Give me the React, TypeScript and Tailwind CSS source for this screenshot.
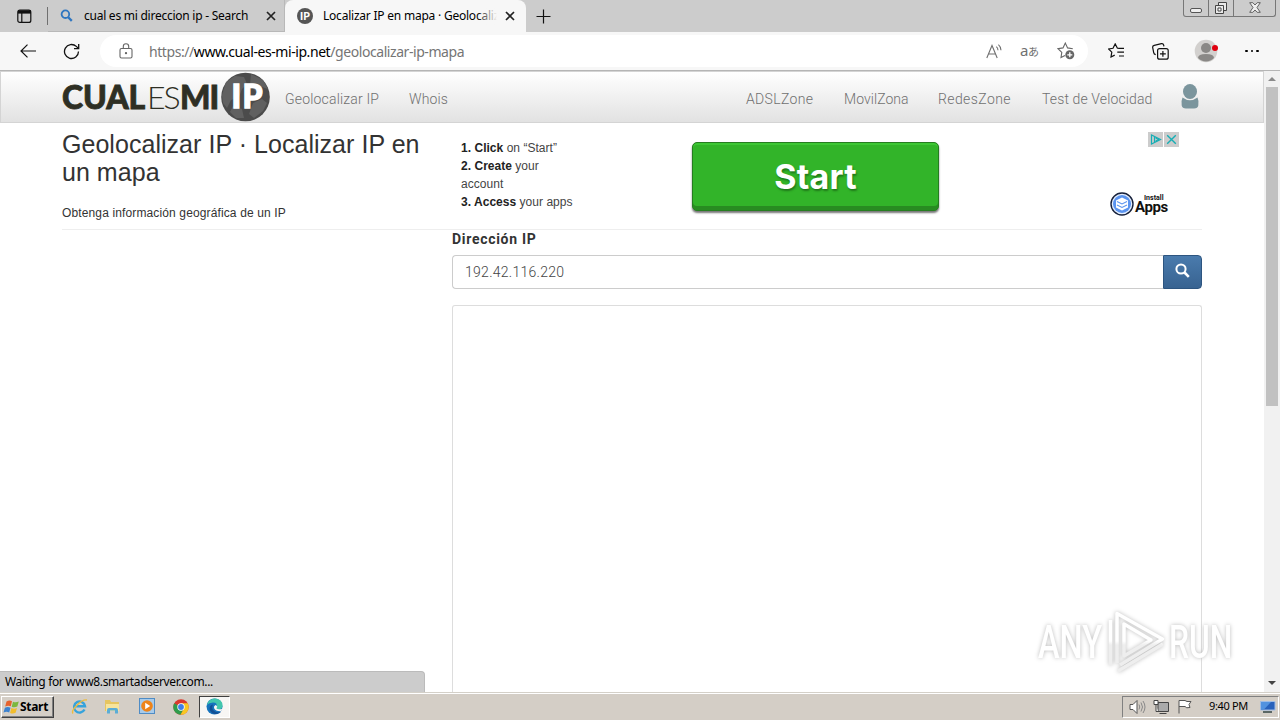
import type { ReactNode } from "react";
import clsx from "clsx";

const UI = "font-['Noto_Sans',sans-serif]";
const ARIAL = "font-['Liberation_Sans',sans-serif]";
const ROBOTO = "font-['Roboto',sans-serif]";

const CloseIcon = () => (
  <svg width="10" height="10" viewBox="0 0 10 10" className="shrink-0" stroke="#222" strokeWidth="1.7">
    <path d="M1 1l8 8M9 1l-8 8" />
  </svg>
);

const IpBadge = () => (
  <svg width="16" height="16" viewBox="0 0 16 16" className="shrink-0">
    <circle cx="8" cy="8" r="8" fill="#555" />
    <text x="8" y="11.7" textAnchor="middle" fontFamily="Lato" fontWeight="900" fontSize="10.5" fill="#fff">IP</text>
  </svg>
);

const TabBar = () => (
  <div className="flex h-8 bg-[#cccccc]">
    <div className="flex w-[47px] items-center pl-[17px]">
      <svg width="15" height="15" viewBox="0 0 15 15" fill="none" stroke="#111" strokeWidth="1.2">
        <rect x=".8" y="1.2" width="13" height="12.2" rx="2" />
        <path d="M1 3h13" strokeWidth="3.2" />
        <path d="M4.8 4v9" />
      </svg>
    </div>
    <div className="my-[7px] w-px bg-[#707070]" />
    <div className="flex w-[237px] items-center border-r border-b border-[#b8b8b8] pl-3">
      <svg width="13" height="13" viewBox="0 0 13 13" fill="none" stroke="#2f76c0" className="shrink-0">
        <circle cx="5.4" cy="5.2" r="3.8" strokeWidth="1.8" />
        <path d="M8.2 8.2l3.6 3.7" strokeWidth="2.3" />
      </svg>
      <span className={clsx(UI, "ml-[11px] w-[182px] whitespace-nowrap text-[12px] tracking-[-0.25px] text-black")}>
        cual es mi direccion ip - Search
      </span>
      <CloseIcon />
    </div>
    <div className="flex w-[241px] items-center rounded-t-lg bg-[#f7f7f7] pl-3">
      <IpBadge />
      <div className="relative ml-[10px] w-[174px] overflow-hidden">
        <span className={clsx(UI, "block whitespace-nowrap text-[12px] tracking-[-0.22px] text-black")}>
          Localizar IP en mapa · Geolocaliz
        </span>
        <div className="absolute inset-y-0 right-0 w-5 bg-linear-to-r from-transparent to-[#f7f7f7]" />
      </div>
      <div className="w-[8px]" />
      <CloseIcon />
    </div>
    <div className="flex flex-1 items-center pl-[10px]">
      <svg width="15" height="15" viewBox="0 0 15 15" stroke="#111" strokeWidth="1.2">
        <path d="M7.5 .5v14M.5 7.5h14" />
      </svg>
    </div>
    <div className="mr-1 flex h-[17px] w-[93px] rounded-b-[3px] border border-t-0 border-[#777]">
      <div className="flex w-[25px] items-end justify-center border-r border-[#777] pb-[3px]">
        <svg width="12" height="5" viewBox="0 0 12 5">
          <rect x=".5" y=".5" width="11" height="4" rx="1.5" fill="#eee" stroke="#555" />
        </svg>
      </div>
      <div className="flex w-[25px] items-end justify-center border-r border-[#777] pb-px">
        <svg width="14" height="14" viewBox="0 0 14 14" fill="#e8e8e8" stroke="#444">
          <path d="M4.500 1.500h8v8h-8z" />
          <path d="M1.500 4.500h8v8h-8z" />
          <path d="M4 7h3v3H4z" fill="#fff" />
        </svg>
      </div>
      <div className="flex flex-1 items-end justify-center pb-[3px]">
        <svg width="12" height="11" viewBox="0 0 12 11" fill="#eee" stroke="#555" strokeWidth=".9">
          <path d="M.7.7h3.1L6 3 8.200.7h3.1L8 5.5l3.300 4.800H8.200L6 8l-2.200 2.300H.7L4 5.500z" />
        </svg>
      </div>
    </div>
  </div>
);

const AddressBar = () => (
  <div className="flex h-[38px] items-center bg-[#f7f7f7]">
    <div className="flex w-[100px] items-center pl-5">
      <svg width="16" height="14" viewBox="0 0 16 14" fill="none" stroke="#111" strokeWidth="1.2">
        <path d="M7.500 .6L1 7l6.500 6.400M1 7h15" />
      </svg>
      <svg width="17" height="17" viewBox="0 0 17 17" fill="none" stroke="#111" strokeWidth="1.3" className="ml-[27px]">
        <path d="M15.500 8.500a7 7 0 1 1-2.200-5.100L15.500 5.500" />
        <path d="M15.700 1v4.700H11" />
      </svg>
    </div>
    <div className="flex h-8 w-[988px] items-center rounded-full bg-white pl-[19px]">
      <svg width="14" height="16" viewBox="0 0 14 16" fill="none" stroke="#666" strokeWidth="1.100">
        <rect x="1" y="5.500" width="12" height="9.500" rx="1.500" />
        <path d="M4.300 5.500V3.400a2.700 2.700 0 0 1 5.400 0v2.100" />
        <circle cx="7" cy="10.200" r=".6" fill="#666" />
      </svg>
      <span className={clsx(UI, "ml-4 w-[837px] whitespace-nowrap text-[14px] tracking-[-0.430px] text-[#757575]")}>
        https://<span className="text-black">www.cual-es-mi-ip.net</span>/geolocalizar-ip-mapa
      </span>
      <svg width="17" height="15" viewBox="0 0 17 15" fill="none" stroke="#707070" strokeWidth="1.100">
        <path d="M.8 14L6 1.500 11.200 14M2.600 10h6.900" />
        <path d="M10.300 2.600q1.600 1.300 1.700 3.600M12.400.7q2.400 2 2.600 5.600" />
      </svg>
      <span className="ml-[17px] w-[20px] whitespace-nowrap font-['Noto_Sans','Noto_Sans_CJK_JP',sans-serif] text-[15px] leading-4 tracking-[-0.500px] text-[#707070]">
        a<span className="text-[11px]">あ</span>
      </span>
      <svg width="18" height="18" viewBox="0 0 18 18" fill="none" stroke="#666" strokeWidth="1.100" className="ml-[17px]">
        <path d="M8 15l-4 2 .8-5.100L1 8.200l5-.8L8.300 2.600l2.300 4.800 5.200.8" transform="translate(0 -1.500)" />
        <circle cx="12.800" cy="12.800" r="4.500" fill="#666" stroke="none" />
        <path d="M12.800 10.300v5M10.300 12.800h5" stroke="#fff" strokeWidth="1.300" />
      </svg>
    </div>
    <div className="flex flex-1 items-center pl-5">
      <svg width="17" height="16" viewBox="0 0 17 16" fill="none" stroke="#111" strokeWidth="1.200">
        <path d="M10.500 5.400L9.300 5 7.200.9 5 5.300l-4.400.7 3.200 3.200-.8 4.800 3.700-1.900M10.500 5.400H16M9.300 9.200H16M11 13h5" />
      </svg>
      <svg width="17" height="17" viewBox="0 0 17 17" fill="none" stroke="#111" strokeWidth="1.200" className="ml-[27px]">
        <rect x="5.600" y="5.600" width="10.600" height="10.600" rx="2" />
        <path d="M10.900 8v5.800M8 10.900h5.800" />
        <path d="M3.700 11.700A2.600 2.600 0 0 1 1.700 9.600L.7 4.600a2 2 0 0 1 1.500-2.300L9.400.7a2 2 0 0 1 2.300 1.500l.2 1.200" />
      </svg>
      <svg width="24" height="24" viewBox="0 0 24 24" className="ml-[25px]">
        <circle cx="12" cy="12" r="11.300" fill="#d2d0ce" />
        <circle cx="12" cy="9" r="5" fill="#8a8886" />
        <path d="M4 19q0-4 8-4t8 4a11 11 0 0 1-16 0z" fill="#8a8886" />
        <circle cx="21" cy="9" r="3" fill="#e0000f" />
      </svg>
      <div className="ml-[27px] flex gap-[3px]">
        <i className="size-[2.500px] rounded-full bg-black" />
        <i className="size-[2.500px] rounded-full bg-black" />
        <i className="size-[2.500px] rounded-full bg-black" />
      </div>
    </div>
  </div>
);

const NavLink = ({ className, children }: { className: string; children: ReactNode }) => (
  <a className={clsx(ROBOTO, "pt-[5px] text-[14px] font-light whitespace-nowrap text-[#707070]", className)}>{children}</a>
);

const Navbar = () => (
  <nav className="flex h-[52px] items-center border border-[#d4d4d4] bg-linear-to-b from-white to-[#e2e2e2] pl-[61px]">
    <div className="flex h-[50px] w-[159px] items-center font-['Lato',sans-serif] text-[32px] whitespace-nowrap text-[#2e2f24]">
      <span className="w-[85px] font-black tracking-[-0.100px] [-webkit-text-stroke:0.800px_#2e2f24]">CUAL</span>
      <span className="w-[33px] font-light tracking-[-2px]">ES</span>
      <span className="font-black tracking-[-1px] [-webkit-text-stroke:0.800px_#2e2f24]">MI</span>
    </div>
    <svg width="49" height="50" viewBox="0 0 49 50">
      <circle cx="24.500" cy="25" r="24.300" fill="#4b4b4b" />
      <path d="M5 10L14 4l9 1 3 7-5 5-3 8-8 3-4 8-4-5-1-8zM30 2l12 6 5 9-6-2-6 5-6-7zM32 31l9-4 5 4-4 8-9 7-5-4zM12 34l9 3 2 9-8 0-6-6z" fill="#606060" />
      <text x="26" y="36" textAnchor="middle" textLength="31" fontFamily="Lato" fontWeight="900" fontSize="32" fill="#fff" stroke="#fff" strokeWidth="1.300">IP</text>
    </svg>
    <NavLink className="ml-[15px] w-[124px] tracking-[0.180px]">Geolocalizar IP</NavLink>
    <NavLink className="w-[337px] tracking-[0.100px]">Whois</NavLink>
    <NavLink className="w-[98px] tracking-[0.350px]">ADSLZone</NavLink>
    <NavLink className="w-[94px] tracking-[0.050px]">MovilZona</NavLink>
    <NavLink className="w-[104px] tracking-[0.400px]">RedesZone</NavLink>
    <NavLink className="w-[139px] tracking-[0.120px]">Test de Velocidad</NavLink>
    <svg width="18" height="25" viewBox="0 0 18 25" fill="#7b959d" className="-mt-[2px]">
      <ellipse cx="9" cy="7.500" rx="7" ry="7.500" />
      <path d="M1.500 13.500q7.500 5.500 15 0 1.500 3 .8 8-.5 3-4.300 3H5q-3.800 0-4.300-3-.7-5 .8-8z" />
    </svg>
  </nav>
);

const AdBanner = () => (
  <div className="flex h-[98px] w-[750px]">
    <div className={clsx(ARIAL, "w-[240px] pt-[8px] pl-[9px] text-[12px] leading-[18px] tracking-[0.030px] text-[#444]")}>
      <p><b className="text-[#222]">1. Click</b> on “Start”</p>
      <p><b className="text-[#222]">2. Create</b> your</p>
      <p>account</p>
      <p><b className="text-[#222]">3. Access</b> your apps</p>
    </div>
    <button className="mt-[11px] flex h-[69px] w-[247px] items-center justify-center rounded-[5px] border border-[#267d20] bg-[#32b429] font-['Inter',sans-serif] text-[34px] font-bold tracking-[0.200px] text-white shadow-[inset_0_2px_0_#3cc733,inset_0_-4px_0_#288c21,0_2px_2px_#777] [text-shadow:1px_2px_2px_#207a1a]">
      <span>Start</span>
    </button>
    <div className="flex flex-1 flex-col items-end pt-px pr-[23px]">
      <div className="flex gap-px">
        <svg width="15" height="15" viewBox="0 0 15 15" fill="none" stroke="#16aeb5" strokeWidth="1.200">
          <path d="M0 0h15v15H0z" fill="#ccc" stroke="none" />
          <path d="M3.500 3v9l9-4.500zM6.500 4.500v6" />
          <path d="M7.500 5.800l3 1.700-3 1.700" />
        </svg>
        <svg width="15" height="15" viewBox="0 0 15 15" stroke="#16aeb5" strokeWidth="1.400">
          <path d="M0 0h15v15H0z" fill="#ccc" stroke="none" />
          <path d="M3.200 3.200l8.600 8.600M11.800 3.200l-8.600 8.600" />
        </svg>
      </div>
      <div className="mt-[45px] mr-[10px] flex items-center gap-px">
        <svg width="24" height="24" viewBox="0 0 24 24">
          <circle cx="12" cy="12" r="11" fill="#e5efff" stroke="#17203a" strokeWidth="1.400" />
          <circle cx="12" cy="12" r="9" fill="#5b94ef" />
          <path d="M6 8.500L12 5.500l6 3v7l-6 3-6-3z" fill="#fff" />
          <path d="M7 9.500l5 2.500 5-2.500M7 13l5 2.500 5-2.500" fill="none" stroke="#5b94ef" strokeWidth="1.100" />
        </svg>
        <div className={clsx(ROBOTO, "flex w-[34px] flex-col font-bold text-[#111]")}>
          <span className="pl-[9px] text-[7px] leading-[6px] tracking-[0.020px]">Install</span>
          <span className="text-[15px] leading-[12px] tracking-[-0.400px]">Apps</span>
        </div>
      </div>
    </div>
  </div>
);

const Content = () => (
  <main className="ml-[62px] flex w-[1140px] flex-1 flex-col">
    <div className="flex h-[107px] border-b border-[#eeeeee]">
      <div className={clsx(ARIAL, "w-[390px] pt-[7px] text-[#333]")}>
        <h1 className="w-[370px] text-[25px] leading-7 tracking-[0.040px]">Geolocalizar IP · Localizar IP en un mapa</h1>
        <p className="mt-[19px] text-[12px] leading-4 tracking-[0.130px]">Obtenga información geográfica de un IP</p>
      </div>
      <div className="pt-2">
        <AdBanner />
      </div>
    </div>
    <div className="ml-[390px] flex flex-1 flex-col">
      <label className={clsx(ROBOTO, "h-[25px] text-[14px] leading-[19px] font-bold tracking-[0.700px] text-[#333]")}>Dirección IP</label>
      <div className="flex h-[34px]">
        <div className={clsx(ROBOTO, "flex flex-1 items-center rounded-l border border-r-0 border-[#ccc] pl-3 text-[14px] font-light tracking-[0.280px] text-[#444]")}>
          192.42.116.220
        </div>
        <button className="flex w-[39px] items-center justify-center rounded-r border border-[#2d5580] bg-linear-to-b from-[#4a7bad] to-[#386391] pb-1">
          <svg width="15" height="15" viewBox="0 0 15 15" fill="none" stroke="#fff">
            <circle cx="6" cy="6" r="4.600" strokeWidth="2" />
            <path d="M9.500 9.500l4.300 4.300" strokeWidth="2.600" />
          </svg>
        </button>
      </div>
      <div className="mt-4 flex-1 rounded-t-[3px] border border-b-0 border-[#ddd]" />
    </div>
  </main>
);

const Scrollbar = () => (
  <div className="flex w-4 flex-col items-center bg-[#f1f1f1]">
    <div className="flex h-4 items-center">
      <svg width="8" height="4" viewBox="0 0 8 4"><path d="M0 4l4-4 4 4z" fill="#8a8a8a" /></svg>
    </div>
    <div className="h-[319px] w-3 bg-[#c1c1c1]" />
    <div className="flex-1" />
    <div className="flex h-[18px] items-center">
      <svg width="8" height="4" viewBox="0 0 8 4"><path d="M0 0l4 4 4-4z" fill="#444" /></svg>
    </div>
  </div>
);

const Watermark = () => (
  <svg width="210" height="72" viewBox="0 0 210 72" className="absolute right-[37px] bottom-[45px] drop-shadow-[0_0_2px_#bbb]">
    <defs>
      <linearGradient id="mark" gradientUnits="userSpaceOnUse" x1="0" y1="20" x2="0" y2="60">
        <stop offset=".45" stopColor="#fff" />
        <stop offset=".55" stopColor="#eee" />
      </linearGradient>
    </defs>
    <g fontFamily="Roboto" fontSize="46" fontWeight="500" fill="url(#mark)">
      <text transform="translate(5 55) scale(.72 1)" textLength="89" lengthAdjust="spacingAndGlyphs">ANY</text>
      <text transform="translate(136 55) scale(.72 1)" textLength="88" lengthAdjust="spacingAndGlyphs">RUN</text>
    </g>
    <g fill="none" stroke="url(#mark)" strokeWidth="3.500" strokeLinejoin="round">
      <path d="M91 21v32l27-16z" />
      <path d="M84 60V10.500L129.500 36 87 62" />
      <path d="M77.500 62V17M85 68l45-27" />
    </g>
  </svg>
);

const StatusBubble = () => (
  <div className={clsx(UI, "absolute bottom-7 left-0 h-[21px] w-[425px] rounded-tr-[4px] border-t border-r border-[#bbb] bg-[#cccccc] pl-[5px] text-[12px] leading-5 tracking-[-0.370px] text-black")}>
    Waiting for www8.smartadserver.com...
  </div>
);

const Taskbar = () => (
  <footer className="flex h-7 items-center border-t border-[#d4d0c8] bg-[#d4cec6] pl-px shadow-[inset_0_1px_0_#fff]">
    <div className="mt-px flex h-[22px] w-[53px] items-center border border-t-white border-r-[#404040] border-b-[#404040] border-l-white pl-px shadow-[inset_-1px_-1px_0_#808080]">
      <svg width="17" height="16" viewBox="0 0 17 16" className="shrink-0">
        <path d="M3.500 2.500q3-2 5.500-.3L7.800 7.300q-2.600-1.400-5.600.2z" fill="#e6622d" />
        <path d="M10 2.800q2.800 1.200 5.800-.3l-1.500 5q-3 1.400-5.600.2z" fill="#7cb83f" />
        <path d="M1.900 8.700q2.900-1.600 5.600 0L6.200 13.500q-2.700-1.500-5.700.1z" fill="#3c82cf" />
        <path d="M8.400 9q2.800 1.400 5.600 0l-1.400 4.800q-2.900 1.400-5.500.1z" fill="#f2bd2c" />
      </svg>
      <span className={clsx(UI, "text-[12px] font-bold tracking-[-0.300px] text-black")}>Start</span>
    </div>
    <div className="ml-[17px] flex flex-1 items-center">
      <svg width="17" height="17" viewBox="0 0 17 17" fill="none">
        <path d="M13.500 11.500A5.500 5.500 0 1 1 14 8.200H4" stroke="#36a3dc" strokeWidth="2.400" />
        <path d="M2 15.500C-.5 12.500 10 1 16 2" stroke="#edbc3e" strokeWidth="1.400" />
      </svg>
      <svg width="17" height="17" viewBox="0 0 17 17" className="ml-4">
        <path d="M1 2h5l1 2h8v9H1z" fill="#e6c55f" />
        <path d="M2 6h13v7H2z" fill="#f7e49b" />
        <path d="M3 15.500V12q0-2 2-2h7q2 0 2 2v3.500h-3V12.500H6v3z" fill="#5badd6" />
      </svg>
      <svg width="17" height="17" viewBox="0 0 17 17" className="ml-[18px]">
        <rect x=".5" y=".5" width="15" height="15" fill="#a8cbea" stroke="#4f8cc5" />
        <circle cx="8" cy="8" r="5.800" fill="#ee8419" />
        <path d="M6.200 4.800v6.400l5-3.200z" fill="#fff" />
      </svg>
      <svg width="16" height="16" viewBox="0 0 16 16" className="ml-[17px]">
        <circle cx="8" cy="8" r="7.700" fill="#da392e" />
        <path d="M8 8L1.200 4.300A7.700 7.700 0 0 0 7.500 15.700L11 9.500z" fill="#2f9c4c" />
        <path d="M8 4.300h6.700A7.700 7.700 0 0 1 7.500 15.700L11 9.500z" fill="#f8c823" />
        <circle cx="8" cy="8" r="3.700" fill="#fff" />
        <circle cx="8" cy="8" r="2.900" fill="#3f7fe8" />
      </svg>
      <div className="ml-[10px] flex h-[22px] w-[31px] items-center justify-center border border-t-[#404040] border-r-white border-b-white border-l-[#404040] bg-[#f7f6f4]">
        <svg width="17" height="17" viewBox="0 0 17 17">
          <circle cx="8.500" cy="8.500" r="8" fill="#1673bd" />
          <path d="M.8 7Q3 0 9.500.5q7 .8 7 7 0 4-4.500 4-3 0-1.500-2Q12 4.500 7 4.500 3 4.500.8 7z" fill="#42c6ad" />
          <path d="M7 6.500Q4.500 12 10 14q3 .8 5-.2l-1.200 1.200Q7 18 4 12.500 2.500 7.500 7 6.500z" fill="#124f94" />
          <path d="M9.500 7q3 1.200.8 3.300 1.500 1.700 5.900.4l-1 2.500Q9.500 13.500 8 10q-.4-2 1.500-3z" fill="#f7f6f4" />
        </svg>
      </div>
    </div>
    <div className="mr-px flex h-[22px] w-[157px] items-center border border-t-[#808080] border-r-white border-b-white border-l-[#808080] pl-[6px]">
      <svg width="17" height="16" viewBox="0 0 17 16" fill="#fff" stroke="#555">
        <path d="M1 5.500h3l4-4v13l-4-4H1z" />
        <path d="M10 5.500q1.500 2.500 0 5M12 3.500q3 4.500 0 9M14 2q4 6 0 12" fill="none" stroke="#888" />
      </svg>
      <svg width="17" height="16" viewBox="0 0 17 16" fill="#fff" stroke="#444" className="ml-[7px]">
        <path d="M5 3.500h10.500v9H5z" fill="#aaa" />
        <path d="M6.500 14.500h7M1 1.500h4v4H1zM3 5.500v7h2" />
      </svg>
      <svg width="16" height="15" viewBox="0 0 16 15" fill="#fff" stroke="#555" className="ml-[7px]">
        <path d="M2 14.500V1.500h6q1 1.500 6 1l-2 3 1 3q-4 1-5-1H2" />
      </svg>
      <span className={clsx(UI, "ml-[16px] w-[51px] text-[11px] tracking-[-0.350px] whitespace-nowrap text-black")}>9:40 PM</span>
      <svg width="16" height="14" viewBox="0 0 16 14" className="shrink-0">
        <path d="M.5 1.500h14.500v8.500H.5z" fill="#2861bb" stroke="#9fbce4" />
        <path d="M1 2h10L4 9.500H1z" fill="#5292df" />
        <path d="M3 12h9" stroke="#344" strokeWidth="1.500" />
      </svg>
    </div>
  </footer>
);

export default function App() {
  return (
    <div className="relative flex h-[720px] w-[1280px] flex-col overflow-hidden bg-white">
      <TabBar />
      <AddressBar />
      <div className="flex flex-1 border-t border-[#b5b5b5]">
        <div className="flex flex-1 flex-col">
          <Navbar />
          <Content />
        </div>
        <Scrollbar />
      </div>
      <Taskbar />
      <StatusBubble />
      <Watermark />
    </div>
  );
}
